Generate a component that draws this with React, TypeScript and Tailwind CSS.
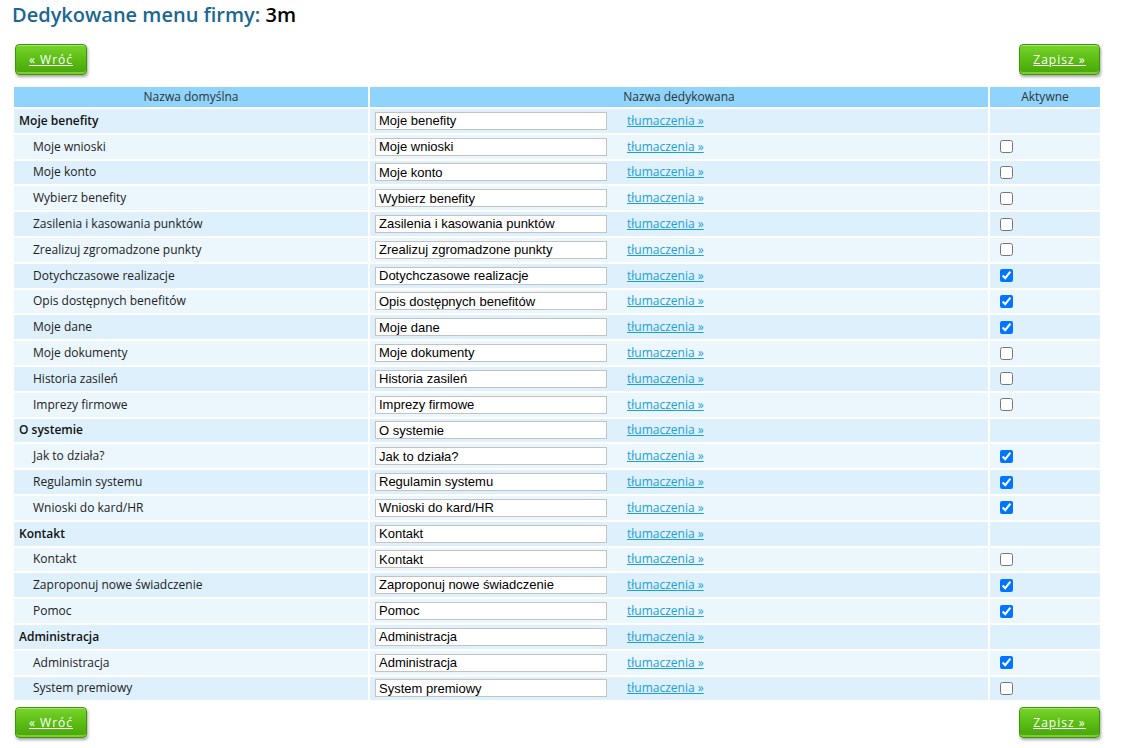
import React from 'react';

interface MenuRow {
  name: string;
  section?: boolean;
  active?: boolean;
}

const rows: MenuRow[] = [
  { name: 'Moje benefity', section: true },
  { name: 'Moje wnioski' },
  { name: 'Moje konto' },
  { name: 'Wybierz benefity' },
  { name: 'Zasilenia i kasowania punktów' },
  { name: 'Zrealizuj zgromadzone punkty' },
  { name: 'Dotychczasowe realizacje', active: true },
  { name: 'Opis dostępnych benefitów', active: true },
  { name: 'Moje dane', active: true },
  { name: 'Moje dokumenty' },
  { name: 'Historia zasileń' },
  { name: 'Imprezy firmowe' },
  { name: 'O systemie', section: true },
  { name: 'Jak to działa?', active: true },
  { name: 'Regulamin systemu', active: true },
  { name: 'Wnioski do kard/HR', active: true },
  { name: 'Kontakt', section: true },
  { name: 'Kontakt' },
  { name: 'Zaproponuj nowe świadczenie', active: true },
  { name: 'Pomoc', active: true },
  { name: 'Administracja', section: true },
  { name: 'Administracja', active: true },
  { name: 'System premiowy' },
];

function GreenButton({ label, className = '' }: { label: string; className?: string }) {
  return (
    <a
      href="#"
      className={`inline-flex h-[31px] items-center justify-center rounded-[4px] border border-[#3d960a] bg-gradient-to-b from-[#77d42a] via-[#5cbd14] to-[#47a50a] text-[12px] tracking-[1px] text-white underline shadow-[1px_2px_3px_rgba(0,0,0,0.35),inset_0_1px_0_rgba(255,255,255,0.35),inset_0_-2px_0_rgba(160,230,80,0.6)] ${className}`}
    >
      {label}
    </a>
  );
}

export default function App() {
  return (
    <div className="min-h-[748px] bg-white font-['Open_Sans',sans-serif] text-[#222]">
      {/* Title */}
      <h1 className="pl-[12px] pt-[3px] text-[20px] font-semibold leading-[24px] text-[#1b6790]">
        Dedykowane menu firmy: <span className="text-black">3m</span>
      </h1>

      {/* Top buttons */}
      <div className="mt-[17px] flex w-[1100px] justify-between pl-[15px]">
        <GreenButton label="« Wróć" className="w-[72px]" />
        <GreenButton label="Zapisz »" className="w-[81px]" />
      </div>

      {/* Table */}
      <table className="ml-[12px] mt-[10px] w-[1090px] border-separate border-spacing-[2px] text-[12px]">
        <thead>
          <tr className="h-[20px] bg-[#8ed4fc] text-[#333]">
            <th className="w-[354px] p-0 font-normal">Nazwa domyślna</th>
            <th className="w-[618px] p-0 font-normal">Nazwa dedykowana</th>
            <th className="p-0 font-normal">Aktywne</th>
          </tr>
        </thead>
        <tbody>
          {rows.map((row, i) => (
            <tr key={i} className={`h-[23.8px] ${i % 2 === 0 ? 'bg-[#ddf0fc]' : 'bg-[#ebf6fd]'}`}>
              <td className={`p-0 ${row.section ? 'pl-[5px] font-semibold text-[#111]' : 'pl-[19px]'}`}>
                {row.name}
              </td>
              <td className="p-0 pl-[5px]">
                <div className="flex items-center">
                  <input
                    type="text"
                    defaultValue={row.name}
                    className="h-[18px] w-[232px] border border-[#c3c3c3] bg-white px-[3px] font-['Liberation_Sans',Arial,sans-serif] text-[13px] text-black outline-none"
                  />
                  <a href="#" className="ml-[20px] text-[12px] text-[#1a9fd8] underline">
                    tłumaczenia »
                  </a>
                </div>
              </td>
              <td className="p-0 pl-[10px]">
                {!row.section && (
                  <input
                    type="checkbox"
                    defaultChecked={row.active}
                    className="m-0 block h-[13px] w-[13px] accent-[#0075ff]"
                  />
                )}
              </td>
            </tr>
          ))}
        </tbody>
      </table>

      {/* Bottom buttons */}
      <div className="mt-[5px] flex w-[1100px] justify-between pl-[15px]">
        <GreenButton label="« Wróć" className="w-[72px]" />
        <GreenButton label="Zapisz »" className="w-[81px]" />
      </div>
    </div>
  );
}
